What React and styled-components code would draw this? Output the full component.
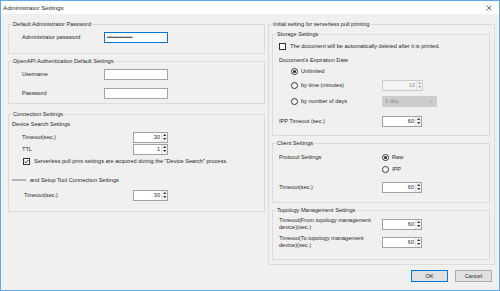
import React from "react";
import styled, { createGlobalStyle } from "styled-components";

const FONT = `"Liberation Sans", Arial, sans-serif`;
const textSize = "5.6px";
const textColor = "#262626";
const groupLine = "#dcdcdc";
const accent = "#0078d7";

const GlobalStyle = createGlobalStyle`
  html, body { margin: 0; padding: 0; background: #ffffff; }
  body { font-family: ${FONT}; }
  * { box-sizing: border-box; }
`;

const Window = styled.div`
  width: 500px;
  height: 291px;
  border: 1px solid #62a8ec;
  background: #f0f0f0;
  display: flex;
  flex-direction: column;
  font-size: ${textSize};
  line-height: 7px;
  color: ${textColor};
  overflow: hidden;
`;

const TitleBar = styled.div`
  height: 13px;
  flex: none;
  background: #ffffff;
  display: flex;
  align-items: center;
  justify-content: space-between;
  padding: 0 7px 0 2px;
`;

const Title = styled.span`
  font-size: 6.2px;
  color: #2a2a2a;
`;

const CloseIcon = styled.svg`
  width: 6px;
  height: 6px;
`;

const Body = styled.div`
  flex: 1;
  display: flex;
  flex-direction: column;
  padding: 7px 4px 0 7px;
`;

const Columns = styled.div`
  display: grid;
  grid-template-columns: 257px 227px;
  column-gap: 3px;
  align-items: start;
`;

const Column = styled.div`
  display: flex;
  flex-direction: column;
`;

const Group = styled.fieldset`
  margin: ${(p) => p.$mt || 0}px 0 0 0;
  padding: ${(p) => p.$pt || 0}px ${(p) => p.$pr || 0}px ${(p) => p.$pb || 0}px 3px;
  border: 1px solid ${groupLine};
  min-width: 0;
`;

const Legend = styled.legend`
  padding: 0 1px;
  font-size: ${textSize};
  line-height: 7px;
  color: ${textColor};
`;

const Row = styled.div`
  display: flex;
  align-items: center;
  height: ${(p) => p.$h || 12}px;
  margin-top: ${(p) => p.$mt || 0}px;
  padding-left: ${(p) => (p.$indent === undefined ? 10 : p.$indent)}px;
`;

const Label = styled.span`
  width: ${(p) => p.$w}px;
  flex: none;
  line-height: 7px;
  white-space: nowrap;
`;

const SubHeading = styled.div`
  height: ${(p) => p.$h || 12}px;
  margin-top: ${(p) => p.$mt || 0}px;
  padding-left: ${(p) => p.$indent || 0}px;
  display: flex;
  align-items: center;
`;

const Redacted = styled.span`
  display: inline-block;
  width: 14px;
  height: 2px;
  margin-right: 4px;
  background: #b4b4b4;
  filter: blur(0.5px);
`;

const TextInput = styled.div`
  width: 64px;
  height: 11px;
  background: #ffffff;
  border: 1px solid ${(p) => (p.$focused ? accent : "#a2a2a2")};
  display: flex;
  align-items: center;
  padding-left: 2px;
  overflow: hidden;
`;

const Dots = styled.span`
  font-size: 4.6px;
  letter-spacing: -0.2px;
  color: #111;
`;

const Spin = styled.div`
  width: ${(p) => p.$w}px;
  height: 11px;
  display: flex;
  background: ${(p) => (p.$disabled ? "#f4f4f4" : "#ffffff")};
  border: 1px solid ${(p) => (p.$disabled ? "#cccccc" : "#a2a2a2")};
  color: ${(p) => (p.$disabled ? "#8a8a8a" : textColor)};
`;

const SpinValue = styled.span`
  flex: 1;
  text-align: right;
  padding-right: 1px;
  line-height: 9px;
`;

const SpinArrows = styled.div`
  width: 6px;
  flex: none;
  display: flex;
  flex-direction: column;
  border-left: 1px solid #e2e2e2;
  background: #f2f2f2;
`;

const ArrowCell = styled.div`
  flex: 1;
  display: flex;
  align-items: center;
  justify-content: center;
`;

const Arrow = styled.svg`
  width: 3.5px;
  height: 2px;
  fill: ${(p) => (p.$disabled ? "#a0a0a0" : "#333")};
`;

const Select = styled.div`
  width: 55px;
  height: 11px;
  background: #cccccc;
  border: 1px solid #cccccc;
  color: #8a8a8a;
  display: flex;
  align-items: center;
  justify-content: space-between;
  padding: 0 3px 0 2px;
`;

const Chevron = styled.svg`
  width: 4px;
  height: 3px;
`;

const Box = styled.span`
  width: 7px;
  height: 7px;
  flex: none;
  border: 1px solid #333;
  background: #fff;
  display: flex;
  align-items: center;
  justify-content: center;
  margin-right: 4px;
`;

const Circle = styled(Box)`
  border-radius: 50%;
  margin-right: 3px;
`;

const Dot = styled.span`
  width: 3px;
  height: 3px;
  border-radius: 50%;
  background: #222;
`;

const Choice = styled.span`
  display: flex;
  align-items: center;
  width: ${(p) => (p.$w ? `${p.$w}px` : "auto")};
  flex: none;
`;

const TwoLine = styled.span`
  width: 103px;
  flex: none;
  line-height: 7px;
`;

const Footer = styled.div`
  display: flex;
  justify-content: flex-end;
  gap: 7px;
  margin-top: 5px;
  padding-right: 3px;
`;

const Button = styled.button`
  width: 37px;
  height: 12px;
  padding: 0;
  font-family: ${FONT};
  font-size: ${textSize};
  color: ${textColor};
  background: #e1e1e1;
  border: 1px solid ${(p) => (p.$primary ? accent : "#adadad")};
`;

const SpinBox = ({ value, width = 35, disabled }) => (
  <Spin $w={width} $disabled={disabled}>
    <SpinValue>{value}</SpinValue>
    <SpinArrows>
      <ArrowCell>
        <Arrow viewBox="0 0 4 2.4" $disabled={disabled}>
          <path d="M0 2.4 L2 0 L4 2.4 Z" />
        </Arrow>
      </ArrowCell>
      <ArrowCell>
        <Arrow viewBox="0 0 4 2.4" $disabled={disabled}>
          <path d="M0 0 L2 2.4 L4 0 Z" />
        </Arrow>
      </ArrowCell>
    </SpinArrows>
  </Spin>
);

const Checkbox = ({ checked }) => (
  <Box>
    {checked && (
      <svg width="5" height="5" viewBox="0 0 5 5">
        <path d="M0.6 2.6 L2 3.9 L4.4 1" stroke="#222" strokeWidth="0.9" fill="none" />
      </svg>
    )}
  </Box>
);

const Radio = ({ selected }) => <Circle>{selected && <Dot />}</Circle>;

export default function App() {
  return (
    <>
      <GlobalStyle />
      <Window>
        <TitleBar>
          <Title>Administrator Settings</Title>
          <CloseIcon viewBox="0 0 10 10">
            <path d="M1 1 L9 9 M9 1 L1 9" stroke="#222" strokeWidth="1.1" />
          </CloseIcon>
        </TitleBar>

        <Body>
          <Columns>
            <Column>
              <Group $pt={3} $pb={9}>
                <Legend>Default Administrator Password</Legend>
                <Row $h={13}>
                  <Label $w={82}>Administrator password</Label>
                  <TextInput $focused>
                    <Dots>••••••••••••••••••</Dots>
                  </TextInput>
                </Row>
              </Group>

              <Group $mt={4} $pt={3} $pb={3}>
                <Legend>OpenAPI Authentication Default Settings</Legend>
                <Row $h={13}>
                  <Label $w={82}>Username</Label>
                  <TextInput />
                </Row>
                <Row $h={13} $mt={6}>
                  <Label $w={82}>Password</Label>
                  <TextInput />
                </Row>
              </Group>

              <Group $mt={7} $pt={0} $pb={10}>
                <Legend>Connection Settings</Legend>
                <SubHeading $h={13}>Device Search Settings</SubHeading>
                <Row>
                  <Label $w={111}>Timeout(sec.)</Label>
                  <SpinBox value="30" />
                </Row>
                <Row>
                  <Label $w={111}>TTL</Label>
                  <SpinBox value="1" />
                </Row>
                <Row $h={13} $indent={11}>
                  <Checkbox checked />
                  <span>
                    Serverless pull print settings are acquired during the "Device Search" process.
                  </span>
                </Row>
                <SubHeading $mt={6}>
                  <Redacted />
                  and Setup Tool Connection Settings
                </SubHeading>
                <Row $mt={3} $indent={12}>
                  <Label $w={109}>Timeout(sec.)</Label>
                  <SpinBox value="30" />
                </Row>
              </Group>
            </Column>

            <Column>
              <Group $pt={3} $pr={4} $pb={4}>
                <Legend>Initial setting for serverless pull printing</Legend>

                <Group $pt={2} $pb={8}>
                  <Legend>Storage Settings</Legend>
                  <Row $indent={3}>
                    <Checkbox />
                    <span>The document will be automatically deleted after it is printed.</span>
                  </Row>
                  <SubHeading $h={10} $mt={3} $indent={3}>
                    Document's Expiration Date
                  </SubHeading>
                  <Row $indent={15}>
                    <Radio selected />
                    <span>Unlimited</span>
                  </Row>
                  <Row $h={16} $indent={15}>
                    <Choice $w={91}>
                      <Radio />
                      <span>by time (minutes)</span>
                    </Choice>
                    <SpinBox value="10" width={41} disabled />
                  </Row>
                  <Row $h={16} $indent={15}>
                    <Choice $w={91}>
                      <Radio />
                      <span>by number of days</span>
                    </Choice>
                    <Select>
                      <span>1 day</span>
                      <Chevron viewBox="0 0 8 5">
                        <path d="M0.5 0.5 L4 4 L7.5 0.5" stroke="#8a8a8a" strokeWidth="1" fill="none" />
                      </Chevron>
                    </Select>
                  </Row>
                  <Row $mt={6} $indent={3}>
                    <Label $w={103}>IPP Timeout (sec.)</Label>
                    <SpinBox value="60" width={40} />
                  </Row>
                </Group>

                <Group $mt={4} $pt={4} $pb={9}>
                  <Legend>Client Settings</Legend>
                  <Row $indent={3}>
                    <Label $w={103}>Protocol Settings</Label>
                    <Choice>
                      <Radio selected />
                      <span>Raw</span>
                    </Choice>
                  </Row>
                  <Row $indent={106}>
                    <Choice>
                      <Radio />
                      <span>IPP</span>
                    </Choice>
                  </Row>
                  <Row $mt={6} $indent={3}>
                    <Label $w={103}>Timeout(sec.)</Label>
                    <SpinBox value="60" width={40} />
                  </Row>
                </Group>

                <Group $mt={4} $pt={2} $pb={9}>
                  <Legend>Topology Management Settings</Legend>
                  <Row $h={16} $indent={3}>
                    <TwoLine>
                      Timeout(From topology management
                      <br />
                      device)(sec.)
                    </TwoLine>
                    <SpinBox value="60" width={40} />
                  </Row>
                  <Row $h={16} $mt={2} $indent={3}>
                    <TwoLine>
                      Timeout(To topology management
                      <br />
                      device)(sec.)
                    </TwoLine>
                    <SpinBox value="60" width={40} />
                  </Row>
                </Group>
              </Group>
            </Column>
          </Columns>

          <Footer>
            <Button $primary>OK</Button>
            <Button>Cancel</Button>
          </Footer>
        </Body>
      </Window>
    </>
  );
}
